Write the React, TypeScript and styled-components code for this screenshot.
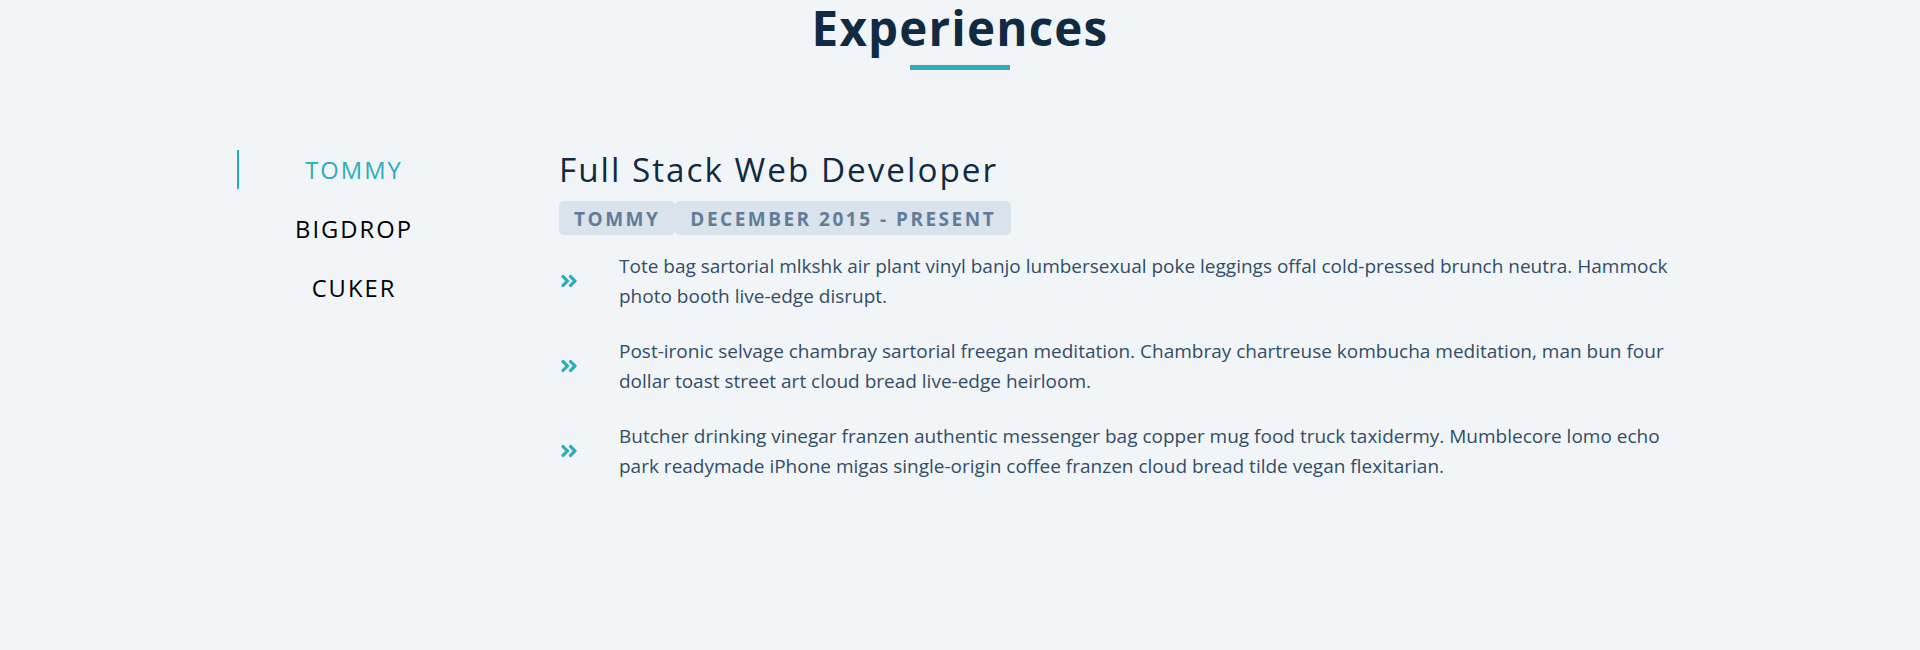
import React, { useState } from "react";
import styled, { createGlobalStyle } from "styled-components";
import { FaAngleDoubleRight } from "react-icons/fa";

const GlobalStyle = createGlobalStyle`
  *, *::before, *::after { box-sizing: border-box; }
  html, body { margin: 0; padding: 0; }
  body {
    background: #f1f5f8;
    font-family: "Open Sans", "Noto Sans", sans-serif;
    color: #102a42;
  }
`;

const Section = styled.section`
  width: 1462px;
  margin: 0 auto;
`;

const TitleBlock = styled.div`
  text-align: center;
  padding-top: 3px;
  margin-bottom: 80px;
`;

const Heading = styled.h2`
  margin: 0 0 12px;
  font-size: 47.5px;
  line-height: 50px;
  font-weight: 700;
  letter-spacing: 1.2px;
  color: #102a42;
`;

const Underline = styled.div`
  width: 100px;
  height: 5px;
  margin: 0 auto;
  background: #2caeba;
`;

const JobsCenter = styled.div`
  display: grid;
  grid-template-columns: 250px 1fr;
  column-gap: 80px;
`;

const BtnContainer = styled.div`
  display: flex;
  flex-direction: column;
  justify-content: flex-start;
`;

const JobButton = styled.button<{ $active: boolean }>`
  background: transparent;
  border: 2px solid transparent;
  margin: 0 10px 20px;
  padding: 6px 0 4px;
  font-family: inherit;
  font-size: 23.75px;
  line-height: 25px;
  letter-spacing: 2px;
  cursor: pointer;
  color: ${(p) => (p.$active ? "#2caeba" : "#000000")};
  box-shadow: ${(p) => (p.$active ? "-2px 0 #2caeba" : "none")};
`;

const JobInfo = styled.article`
  padding-top: 2px;
`;

const JobTitle = styled.h3`
  margin: 0 0 14px;
  font-size: 33.25px;
  line-height: 35px;
  font-weight: 400;
  letter-spacing: 2px;
  color: #102a42;
`;

const TagRow = styled.div`
  display: flex;
  margin-bottom: 16px;
`;

const Tag = styled.span`
  display: inline-block;
  padding: 8px 15px 6px;
  border-radius: 5px;
  background: #dae2ec;
  color: #617d98;
  font-size: 19px;
  line-height: 20px;
  font-weight: 700;
  letter-spacing: 2.5px;
  text-transform: uppercase;
`;

const JobDesc = styled.div`
  display: grid;
  grid-template-columns: auto 1fr;
  column-gap: 40px;
  align-items: center;
  margin-bottom: 25px;
`;

const DescIcon = styled(FaAngleDoubleRight)`
  display: block;
  width: 20px;
  height: 20px;
  color: #2caeba;
`;

const DescText = styled.p`
  margin: 0;
  font-size: 19px;
  line-height: 30px;
  color: #324d67;
`;

const jobs = [
  {
    company: "Tommy",
    title: "Full Stack Web Developer",
    dates: "December 2015 - Present",
    duties: [
      "Tote bag sartorial mlkshk air plant vinyl banjo lumbersexual poke leggings offal cold-pressed brunch neutra. Hammock photo booth live-edge disrupt.",
      "Post-ironic selvage chambray sartorial freegan meditation. Chambray chartreuse kombucha meditation, man bun four dollar toast street art cloud bread live-edge heirloom.",
      "Butcher drinking vinegar franzen authentic messenger bag copper mug food truck taxidermy. Mumblecore lomo echo park readymade iPhone migas single-origin coffee franzen cloud bread tilde vegan flexitarian.",
    ],
  },
  {
    company: "Bigdrop",
    title: "Front-End Engineer",
    dates: "May 2015 - December 2015",
    duties: [
      "Hashtag drinking vinegar scenester mumblecore snackwave four dollar toast, lumbersexual XOXO. Cardigan church-key pabst, biodiesel vexillologist viral squid.",
    ],
  },
  {
    company: "Cuker",
    title: "Engineering Intern",
    dates: "May 2014 - September 2015",
    duties: [
      "I'm baby woke mlkshk wolf bitters live-edge blue bottle, hammock freegan copper mug whatever cold-pressed.",
    ],
  },
];

export default function App() {
  const [value, setValue] = useState(0);
  const job = jobs[value];
  return (
    <>
      <GlobalStyle />
      <Section>
        <TitleBlock>
          <Heading>Experiences</Heading>
          <Underline />
        </TitleBlock>
        <JobsCenter>
          <BtnContainer>
            {jobs.map((j, i) => (
              <JobButton key={j.company} $active={i === value} onClick={() => setValue(i)}>
                {j.company.toUpperCase()}
              </JobButton>
            ))}
          </BtnContainer>
          <JobInfo>
            <JobTitle>{job.title}</JobTitle>
            <TagRow>
              <Tag>{job.company}</Tag>
              <Tag>{job.dates}</Tag>
            </TagRow>
            {job.duties.map((d) => (
              <JobDesc key={d}>
                <DescIcon />
                <DescText>{d}</DescText>
              </JobDesc>
            ))}
          </JobInfo>
        </JobsCenter>
      </Section>
    </>
  );
}
